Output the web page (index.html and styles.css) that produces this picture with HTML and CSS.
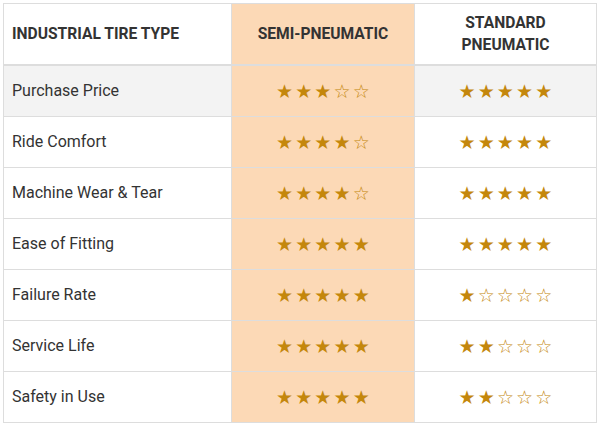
FILE: index.html
```html
<!DOCTYPE html>
<html lang="en">
<head>
<meta charset="utf-8">
<title>Industrial Tire Comparison</title>
<link rel="stylesheet" href="styles.css">
</head>
<body>
<table class="compare">
  <colgroup>
    <col class="c1"><col class="c2"><col class="c3">
  </colgroup>
  <thead>
    <tr>
      <th class="label">INDUSTRIAL TIRE TYPE</th>
      <th class="hl">SEMI-PNEUMATIC</th>
      <th>STANDARD<br>PNEUMATIC</th>
    </tr>
  </thead>
  <tbody>
    <tr class="grey">
      <td class="label">Purchase Price</td>
      <td class="hl stars">★★★<span class="e">☆☆</span></td>
      <td class="stars">★★★★★</td>
    </tr>
    <tr>
      <td class="label">Ride Comfort</td>
      <td class="hl stars">★★★★<span class="e">☆</span></td>
      <td class="stars">★★★★★</td>
    </tr>
    <tr>
      <td class="label">Machine Wear &amp; Tear</td>
      <td class="hl stars">★★★★<span class="e">☆</span></td>
      <td class="stars">★★★★★</td>
    </tr>
    <tr>
      <td class="label">Ease of Fitting</td>
      <td class="hl stars">★★★★★</td>
      <td class="stars">★★★★★</td>
    </tr>
    <tr>
      <td class="label">Failure Rate</td>
      <td class="hl stars">★★★★★</td>
      <td class="stars">★<span class="e">☆☆☆☆</span></td>
    </tr>
    <tr>
      <td class="label">Service Life</td>
      <td class="hl stars">★★★★★</td>
      <td class="stars">★★<span class="e">☆☆☆</span></td>
    </tr>
    <tr>
      <td class="label">Safety in Use</td>
      <td class="hl stars">★★★★★</td>
      <td class="stars">★★<span class="e">☆☆☆</span></td>
    </tr>
  </tbody>
</table>
</body>
</html>
```
FILE: styles.css
```css
html, body {
  margin: 0;
  padding: 0;
  background: #fff;
}
body {
  padding: 3px;
  font-family: Roboto, "Liberation Sans", sans-serif;
  color: #333;
}
.compare {
  border-collapse: separate;
  border-spacing: 0;
  table-layout: fixed;
  width: 594px;
  border-top: 1px solid #dddddd;
  border-left: 1px solid #dddddd;
}
.c1 { width: 228px; }
.c2 { width: 183px; }
.c3 { width: 182px; }
.compare th,
.compare td {
  border-right: 1px solid #dddddd;
  border-bottom: 1px solid #dddddd;
  padding: 0;
  text-align: center;
  vertical-align: middle;
  box-sizing: border-box;
}
.compare th {
  height: 62px;
  border-bottom-width: 2px;
  font-size: 15.6px;
  font-weight: 700;
  line-height: 22px;
}
.compare td {
  height: 51px;
  font-size: 16px;
}
.compare .label {
  text-align: left;
  padding-left: 8px;
}
.compare td.label {
  padding-bottom: 2px;
}
.grey td { background: #f3f3f3; }
.compare .hl { background: #fcd9b6; }
.compare .stars {
  font-family: "DejaVu Sans", sans-serif;
  font-size: 19px;
  letter-spacing: 2.2px;
  color: #c4870c;
  padding-left: 2px;
}
.stars .e { color: #c4870c; }
```
